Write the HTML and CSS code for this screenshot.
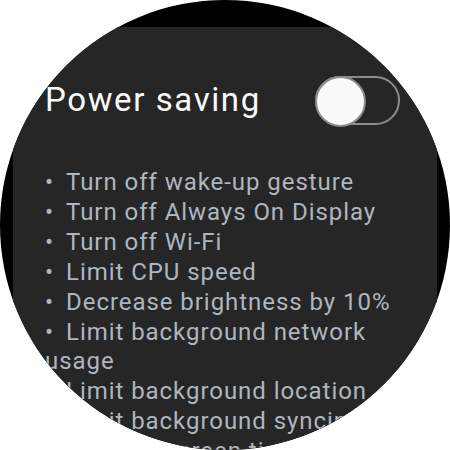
FILE: index.html
```html
<!DOCTYPE html>
<html>
<head>
<meta charset="utf-8">
<link rel="stylesheet" href="styles.css">
</head>
<body>
<div class="watch">
  <div class="screen">
    <div class="header">
      <h1 class="title">Power saving</h1>
      <div class="switch"><div class="thumb"></div></div>
    </div>
    <ul class="list">
      <li><span class="dot">•</span>Turn off wake-up gesture</li>
      <li><span class="dot">•</span>Turn off Always On Display</li>
      <li><span class="dot">•</span>Turn off Wi-Fi</li>
      <li><span class="dot">•</span>Limit CPU speed</li>
      <li><span class="dot">•</span>Decrease brightness by 10%</li>
      <li><span class="dot">•</span>Limit background network usage</li>
      <li><span class="dot">•</span>Limit background location</li>
      <li><span class="dot">•</span>Limit background syncing</li>
      <li><span class="dot">•</span>Turn off screen timeout</li>
    </ul>
  </div>
</div>
</body>
</html>
```
FILE: styles.css
```css
html, body {
  margin: 0;
  padding: 0;
  background: #ffffff;
}
.watch {
  width: 450px;
  height: 450px;
  border-radius: 50%;
  background: #000000;
  overflow: hidden;
  box-sizing: border-box;
  padding: 27px 13px 0 13px;
}
.screen {
  background: #262626;
  min-height: 600px;
  box-sizing: border-box;
  padding: 48px 37px 0 32px;
  font-family: Roboto, "Noto Sans", sans-serif;
}
.header {
  display: flex;
  align-items: center;
  justify-content: space-between;
  height: 50px;
}
.title {
  margin: 0;
  font-weight: 400;
  font-size: 33px;
  letter-spacing: 1.6px;
  color: #fafafa;
  line-height: 50px;
}
.switch {
  position: relative;
  width: 85px;
  height: 49px;
  box-sizing: border-box;
  border: 2px solid #8c8c8c;
  border-radius: 25px;
}
.thumb {
  position: absolute;
  left: -2px;
  top: -2px;
  width: 51px;
  height: 51px;
  box-sizing: border-box;
  border-radius: 50%;
  background: #fafafa;
  border: 2px solid #8a8a8a;
}
.list {
  list-style: none;
  margin: 43px 0 0 0;
  padding: 0;
  font-size: 24px;
  letter-spacing: 0.95px;
  line-height: 29.9px;
  color: #aeb6bf;
}
.dot {
  display: inline-block;
  width: 21px;
}
```
